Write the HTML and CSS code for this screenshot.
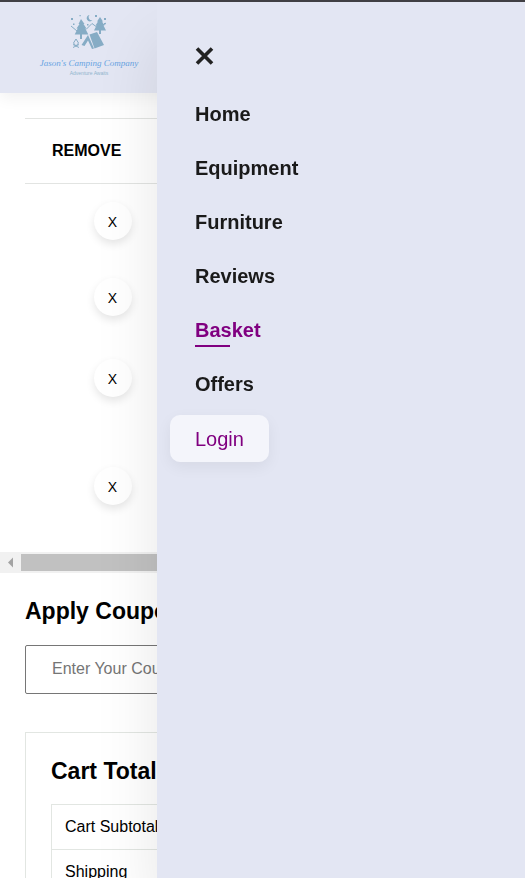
FILE: index.html
```html
<!DOCTYPE html>
<html lang="en">
<head>
<meta charset="utf-8">
<meta name="viewport" content="width=device-width, initial-scale=1">
<title>Basket - Jason's Camping Company</title>
<link rel="stylesheet" href="styles.css">
</head>
<body>
<header class="site-header">
  <a class="logo" href="#" aria-label="Jason's Camping Company">
    <svg width="106" height="66" viewBox="0 0 106 66">
      <g fill="#86acc5">
        <path d="M45 5l3.500 5h-1l3 4.500h-1.200l3 6H38.700l3-6h-1.200l3-4.500h-1z"/>
        <path d="M44 20h2v5h-2zM63 16h2v4h-2z"/>
        <path d="M64 3l3 4.500h-1l2.500 4h-1l2.500 5H58l2.500-5h-1l2.500-4h-1z"/>
        <path d="M53.500 1a3.200 3.200 0 1 0 3 5a3 3 0 0 1-3-5z"/>
        <path d="M53.500 20.500L61 18l7 13-9.500 3.500z"/>
        <path d="M52 21l6 13.500-2 .5-4-8.500-3.500 5.500-3-1z"/>
        <path d="M35 4h2v2h-2zM43.500 1h1.200v1.200h-1.200zM59 1h2v2h-2zM68 4h2v2h-2zM37 9.500h1.500V11H37zM51 10h1.500v1.500H51zM68 9h1.500v1.500H68z"/>
      </g>
      <g fill="none" stroke="#86acc5" stroke-width="1">
        <path d="M35 12l6 5M50 15.500l6-6 4 3M67 11l3-2"/>
        <path d="M37 33.500l6-3M37 30.500l6 3M40 25l-2.500 4 2.500 3 2.500-3z"/>
      </g>
      <text class="logo-name" x="53" y="52" text-anchor="middle">Jason's Camping Company</text>
      <text class="logo-tag" x="53" y="61" text-anchor="middle">Adventure Awaits</text>
    </svg>
  </a>
</header>

<main>
  <section class="basket">
    <table class="basket-table">
      <thead><tr><th>REMOVE</th><th></th></tr></thead>
      <tbody>
        <tr class="row-first"><td><button class="remove" type="button">X</button></td><td></td></tr>
        <tr class="row-second"><td><button class="remove" type="button">X</button></td><td></td></tr>
        <tr class="row-third"><td><button class="remove" type="button">X</button></td><td></td></tr>
        <tr class="row-last"><td><button class="remove" type="button">X</button></td><td></td></tr>
      </tbody>
    </table>
  </section>
  <div class="scrollbar">
    <svg class="scroll-arrow" width="21" height="21" viewBox="0 0 21 21"><path d="M8 10.500l5-5v10z" fill="#a3a3a3"/></svg>
    <div class="scroll-thumb"></div>
  </div>
  <section class="coupon">
    <h2><label for="coupon">Apply Coupon</label></h2>
    <input id="coupon" type="text" placeholder="Enter Your Coupon">
  </section>
  <section class="totals">
    <h2>Cart Total</h2>
    <table class="totals-table">
      <tbody>
        <tr><td>Cart Subtotal</td></tr>
        <tr><td>Shipping</td></tr>
      </tbody>
    </table>
  </section>
</main>

<nav class="drawer">
  <button class="close" type="button" aria-label="Close menu">
    <svg width="19" height="20" viewBox="0 0 19 20"><path d="M2 2.500l15 15M17 2.500l-15 15" stroke="#222" stroke-width="3.600" fill="none"/></svg>
  </button>
  <a href="#">Home</a>
  <a href="#">Equipment</a>
  <a href="#">Furniture</a>
  <a href="#">Reviews</a>
  <a class="active" href="#">Basket</a>
  <a href="#">Offers</a>
  <button class="login" type="button">Login</button>
</nav>
</body>
</html>
```
FILE: styles.css
```css
* {
  box-sizing: border-box;
}

html,
body {
  height: 100%;
  margin: 0;
  overflow: hidden;
}

body {
  border-top: 2px solid #414045;
  background: #fff;
  color: #000;
  font: 16px/20px "Liberation Sans", Arial, sans-serif;
}

.site-header {
  display: flex;
  height: 91px;
  padding: 12px 36px;
  background: #e3e6f3;
  box-shadow: 0 5px 15px rgba(0, 0, 0, 0.06);
}

.logo {
  display: block;
}

.logo svg {
  display: block;
}

.logo-name {
  fill: #68a4e2;
  font: italic 9px "Liberation Serif", serif;
}

.logo-tag {
  fill: #91b5cd;
  font: 5px "Liberation Sans", sans-serif;
}

.basket {
  padding: 25px 0 0 25px;
}

.basket-table,
.totals-table {
  width: 100%;
  border-collapse: collapse;
}

.basket-table th {
  height: 65px;
  padding: 0 27px;
  border-top: 1px solid #e2e4e2;
  border-bottom: 1px solid #e2e4e2;
  text-align: left;
}

.basket-table th:first-child {
  width: 175px;
}

.basket-table td {
  padding: 0;
  text-align: center;
}

.row-first {
  height: 74px;
}

.row-second {
  height: 78px;
}

.row-third {
  height: 84px;
}

.row-last {
  height: 132px;
}

.remove {
  display: block;
  width: 38px;
  height: 38px;
  margin: 0 auto;
  padding: 2px 0 0;
  border: 0;
  border-radius: 50%;
  background: #fff;
  box-shadow: 0 4px 8px rgba(0, 0, 0, 0.1);
  color: #000;
  font: 14px "Liberation Sans", Arial, sans-serif;
}

.scrollbar {
  display: flex;
  height: 21px;
  background: #f1f1f1;
}

.scroll-thumb {
  flex: 1;
  margin: 2px 0;
  background: #c1c1c1;
}

h2 {
  margin: 0;
  font-size: 23px;
  line-height: 28px;
}

.coupon {
  padding: 24px 25px 38px;
}

.coupon input {
  display: block;
  width: 100%;
  height: 49px;
  margin-top: 20px;
  padding: 0 26px;
  border: 1px solid #767676;
  border-radius: 2px;
  background: #fff;
  font: 16px "Liberation Sans", Arial, sans-serif;
}

.coupon input::placeholder {
  color: #757575;
}

.totals {
  margin: 0 25px;
  padding: 24px 25px;
  border: 1px solid #e2e6e2;
}

.totals-table {
  margin-top: 19px;
}

.totals-table td {
  height: 45px;
  padding: 0 13px;
  border: 1px solid #e2e6e2;
}

.drawer {
  position: fixed;
  top: 2px;
  right: 0;
  bottom: 0;
  display: flex;
  width: 70.1%;
  flex-direction: column;
  align-items: flex-start;
  gap: 30px;
  padding: 44px 38px;
  background: #e3e6f3;
  box-shadow: 0 40px 60px rgba(0, 0, 0, 0.1);
}

.drawer a {
  color: #1a1a1a;
  font-size: 20px;
  font-weight: 600;
  line-height: 24px;
  text-decoration: none;
}

.close {
  height: 20px;
  margin-bottom: 6px;
  padding: 0;
  border: 0;
  background: none;
}

.close svg {
  display: block;
}

.drawer .active {
  position: relative;
  color: #800080;
}

.active::after {
  position: absolute;
  bottom: -5px;
  left: 0;
  width: 35px;
  height: 2px;
  background: #800080;
  content: "";
}

.login {
  height: 47px;
  margin: -11px -25px;
  padding: 2px 25px 0;
  border: 0;
  border-radius: 10px;
  background: #f4f5fb;
  box-shadow: 0 5px 15px rgba(0, 0, 0, 0.06);
  color: #800080;
  font: 20px "Liberation Sans", Arial, sans-serif;
}
```
